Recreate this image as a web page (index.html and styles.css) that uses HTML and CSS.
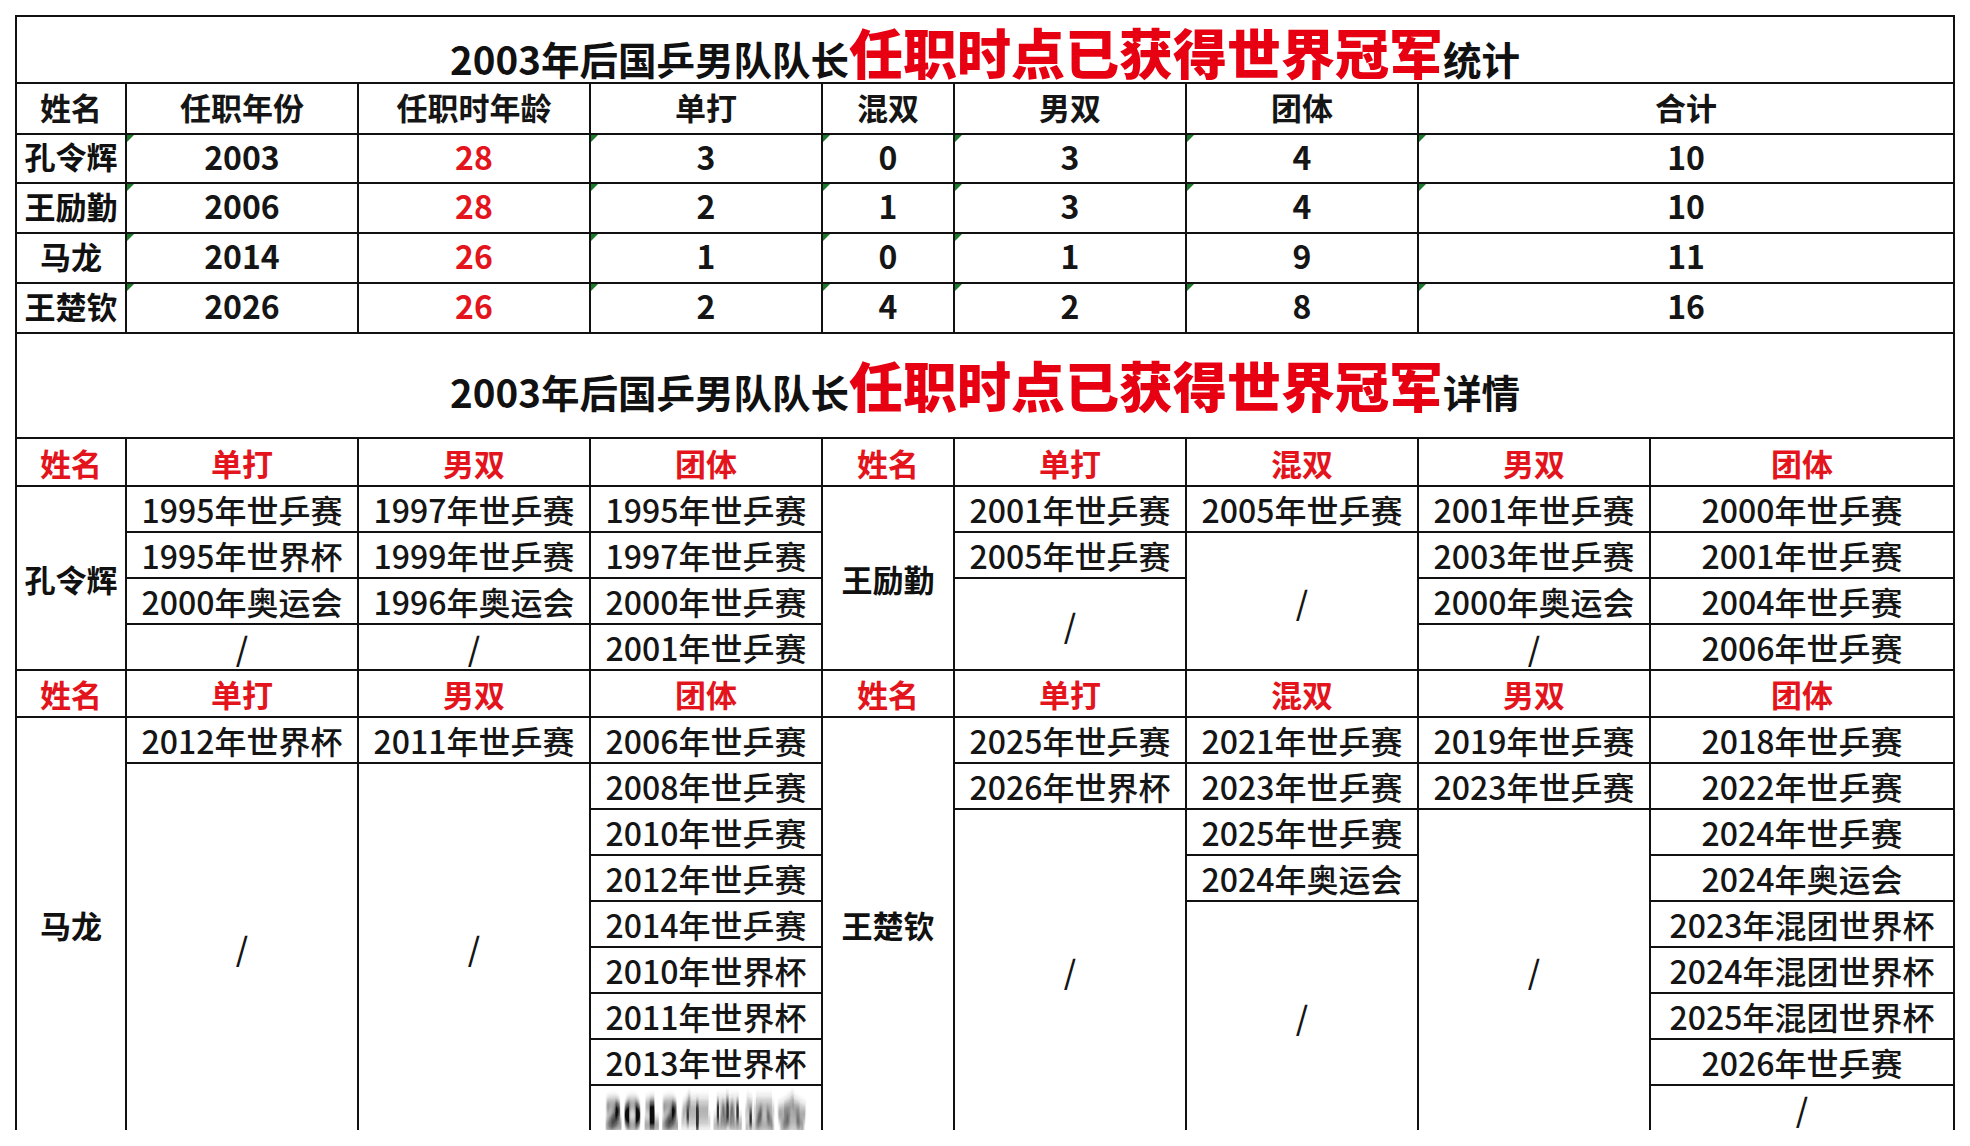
FILE: index.html
```html
<!DOCTYPE html>
<html lang="zh-CN">
<head>
<meta charset="utf-8">
<title>2003年后国乒男队队长任职时点已获得世界冠军统计</title>
<link rel="stylesheet" href="styles.css">
</head>
<body>
<svg class="defs" width="0" height="0" aria-hidden="true">
  <filter id="smear" x="-10%" y="-80%" width="120%" height="260%">
    <feGaussianBlur stdDeviation="0.4 6"/>
    <feComponentTransfer>
      <feFuncA type="linear" slope="1.3"/>
    </feComponentTransfer>
  </filter>
</svg>
<div class="sheet">
<table class="grid">
  <colgroup>
    <col class="c-name"><col class="c-wide"><col class="c-wide"><col class="c-wide">
    <col class="c-name2"><col class="c-wide"><col class="c-wide"><col class="c-wide"><col class="c-last">
  </colgroup>
  <tbody>
    <tr class="r-title1">
      <td colspan="9" class="title title-top"><span class="t-black">2003年后国乒男队队长</span><span class="t-red">任职时点已获得世界冠军</span><span class="t-black">统计</span></td>
    </tr>
    <tr class="r-head">
      <td class="hd">姓名</td><td class="hd">任职年份</td><td class="hd">任职时年龄</td><td class="hd">单打</td><td class="hd">混双</td><td class="hd">男双</td><td class="hd">团体</td><td class="hd" colspan="2">合计</td>
    </tr>
    <tr class="r-data r-first">
      <td class="nm">孔令辉</td><td class="num mk">2003</td><td class="num red">28</td><td class="num mk">3</td><td class="num mk">0</td><td class="num mk">3</td><td class="num mk">4</td><td class="num mk" colspan="2">10</td>
    </tr>
    <tr class="r-data">
      <td class="nm">王励勤</td><td class="num mk">2006</td><td class="num red">28</td><td class="num mk">2</td><td class="num mk">1</td><td class="num mk">3</td><td class="num mk">4</td><td class="num mk" colspan="2">10</td>
    </tr>
    <tr class="r-data">
      <td class="nm">马龙</td><td class="num mk">2014</td><td class="num red">26</td><td class="num mk">1</td><td class="num mk">0</td><td class="num mk">1</td><td class="num">9</td><td class="num" colspan="2">11</td>
    </tr>
    <tr class="r-data">
      <td class="nm">王楚钦</td><td class="num mk">2026</td><td class="num red">26</td><td class="num mk">2</td><td class="num mk">4</td><td class="num mk">2</td><td class="num mk">8</td><td class="num mk" colspan="2">16</td>
    </tr>

    <tr class="r-title2">
      <td colspan="9" class="title title-mid"><span class="t-black">2003年后国乒男队队长</span><span class="t-red">任职时点已获得世界冠军</span><span class="t-black">详情</span></td>
    </tr>
    <tr class="r-head2">
      <td class="rh">姓名</td><td class="rh">单打</td><td class="rh">男双</td><td class="rh">团体</td><td class="rh">姓名</td><td class="rh">单打</td><td class="rh">混双</td><td class="rh">男双</td><td class="rh">团体</td>
    </tr>
    <tr class="r-item">
      <td class="nm" rowspan="4">孔令辉</td>
      <td>1995年世乒赛</td><td>1997年世乒赛</td><td>1995年世乒赛</td>
      <td class="nm" rowspan="4">王励勤</td>
      <td>2001年世乒赛</td><td>2005年世乒赛</td><td>2001年世乒赛</td><td>2000年世乒赛</td>
    </tr>
    <tr class="r-item">
      <td>1995年世界杯</td><td>1999年世乒赛</td><td>1997年世乒赛</td>
      <td>2005年世乒赛</td><td rowspan="3">/</td><td>2003年世乒赛</td><td>2001年世乒赛</td>
    </tr>
    <tr class="r-item">
      <td>2000年奥运会</td><td>1996年奥运会</td><td>2000年世乒赛</td>
      <td rowspan="2">/</td><td>2000年奥运会</td><td>2004年世乒赛</td>
    </tr>
    <tr class="r-item">
      <td>/</td><td>/</td><td>2001年世乒赛</td>
      <td>/</td><td>2006年世乒赛</td>
    </tr>

    <tr class="r-head3">
      <td class="rh">姓名</td><td class="rh">单打</td><td class="rh">男双</td><td class="rh">团体</td><td class="rh">姓名</td><td class="rh">单打</td><td class="rh">混双</td><td class="rh">男双</td><td class="rh">团体</td>
    </tr>
    <tr class="r-item">
      <td class="nm" rowspan="9">马龙</td>
      <td>2012年世界杯</td><td>2011年世乒赛</td><td>2006年世乒赛</td>
      <td class="nm" rowspan="9">王楚钦</td>
      <td>2025年世乒赛</td><td>2021年世乒赛</td><td>2019年世乒赛</td><td>2018年世乒赛</td>
    </tr>
    <tr class="r-item">
      <td rowspan="8">/</td><td rowspan="8">/</td><td>2008年世乒赛</td>
      <td>2026年世界杯</td><td>2023年世乒赛</td><td>2023年世乒赛</td><td>2022年世乒赛</td>
    </tr>
    <tr class="r-item">
      <td>2010年世乒赛</td>
      <td rowspan="7">/</td><td>2025年世乒赛</td><td rowspan="7">/</td><td>2024年世乒赛</td>
    </tr>
    <tr class="r-item">
      <td>2012年世乒赛</td>
      <td>2024年奥运会</td><td>2024年奥运会</td>
    </tr>
    <tr class="r-item">
      <td>2014年世乒赛</td>
      <td rowspan="5">/</td><td>2023年混团世界杯</td>
    </tr>
    <tr class="r-item">
      <td>2010年世界杯</td>
      <td>2024年混团世界杯</td>
    </tr>
    <tr class="r-item">
      <td>2011年世界杯</td>
      <td>2025年混团世界杯</td>
    </tr>
    <tr class="r-item">
      <td>2013年世界杯</td>
      <td>2026年世乒赛</td>
    </tr>
    <tr class="r-item">
      <td class="blurred"><span class="smear"><span class="smear-num">2012</span><span class="smear-cjk">年奥运会</span></span></td>
      <td>/</td>
    </tr>
  </tbody>
</table>
</div>
</body>
</html>
```

FILE: styles.css
```css
* {
  box-sizing: border-box;
}

html, body {
  margin: 0;
  padding: 0;
  background: #ffffff;
}

body {
  width: 1970px;
  height: 1146px;
  overflow: hidden;
  font-family: "Noto Sans CJK SC", "Noto Sans", sans-serif;
  color: #151515;
}

.defs {
  position: absolute;
  width: 0;
  height: 0;
}

.sheet {
  margin: 15px 0 0 15px;
  width: 1940px;
  height: 1115px;
  overflow: hidden;
}

.grid {
  width: 1940px;
  table-layout: fixed;
  border-collapse: separate;
  border-spacing: 0;
  border-top: 2px solid #111;
  border-left: 2px solid #111;
}

.c-name { width: 110px; }
.c-wide { width: 232px; }
.c-name2 { width: 132px; }
.c-last { width: 304px; }

.grid td {
  border-right: 2px solid #111;
  border-bottom: 2px solid #111;
  padding: 0;
  text-align: center;
  vertical-align: middle;
  font-size: 32px;
  font-weight: 500;
  line-height: 1;
  white-space: nowrap;
  position: relative;
}

.r-title1 { height: 67px; }
.r-head { height: 51px; }
.r-data { height: 50px; }
.r-data.r-first { height: 49px; }
.r-title2 { height: 105px; }
.r-head2 { height: 48px; }
.r-item { height: 46px; }
.r-head3 { height: 47px; }

.r-head td {
  padding-bottom: 4px;
}

.r-data td {
  padding-bottom: 6px;
}

.title {
  white-space: nowrap;
}

.grid td.title-top {
  padding-top: 4px;
}

.grid td.title-mid {
  padding-top: 0;
  padding-bottom: 2px;
}

.t-black {
  font-size: 38.5px;
  font-weight: 700;
  color: #111;
}

.t-red {
  font-size: 54px;
  font-weight: 900;
  color: #e60012;
}

.grid td.hd {
  font-weight: 700;
  font-size: 31px;
  color: #151515;
}

.grid td.rh {
  font-weight: 700;
  font-size: 31px;
  color: #e3141c;
}

.grid td.nm {
  font-weight: 700;
  font-size: 31px;
  color: #111;
}

.grid td.num {
  font-weight: 700;
  font-size: 32px;
  color: #151515;
}

.grid td.num.red {
  color: #e3141c;
}

.mk::before {
  content: "";
  position: absolute;
  top: 0;
  left: 0;
  width: 0;
  height: 0;
  border-top: 7px solid #1c7a2c;
  border-right: 7px solid transparent;
}

.blurred {
  overflow: hidden;
}

.smear {
  display: inline-block;
  filter: url(#smear);
  transform: translateY(5px);
}

.smear-num {
  font-weight: 700;
  color: #111;
}

.smear-cjk {
  font-weight: 400;
  color: #333;
}
```
